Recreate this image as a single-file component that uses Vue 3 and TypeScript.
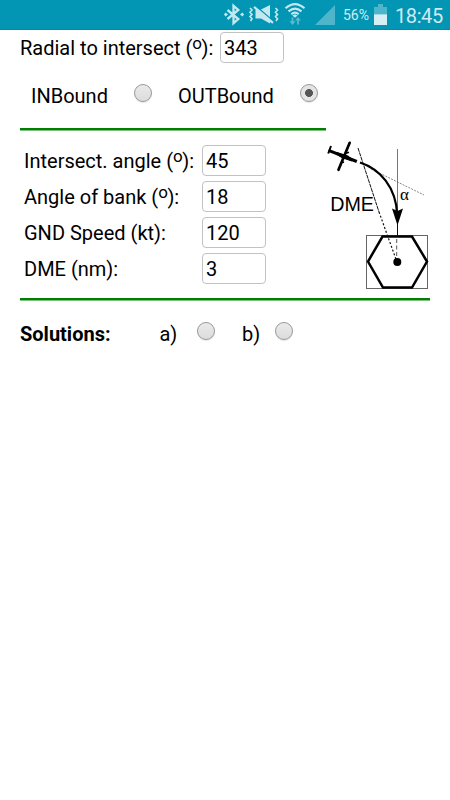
<script setup lang="ts">
import { reactive, ref } from 'vue'

interface Field {
  id: string
  label: string
  degrees: boolean
  value: string
}

const radial = ref('343')
const direction = ref<'in' | 'out'>('out')
const solution = ref<'a' | 'b' | null>(null)
const fields = reactive<Field[]>([
  { id: 'angle', label: 'Intersect. angle', degrees: true, value: '45' },
  { id: 'bank', label: 'Angle of bank', degrees: true, value: '18' },
  { id: 'speed', label: 'GND Speed (kt):', degrees: false, value: '120' },
  { id: 'dme', label: 'DME (nm):', degrees: false, value: '3' },
])
</script>

<template>
  <div class="screen">
    <header class="status">
      <svg class="status-icons" width="126" height="30" viewBox="0 0 126 30">
        <path d="M7.500 10 18.300 19 13.500 23.200V5.800L18.300 10 7.500 19" fill="none" stroke="#c4e8ef" stroke-width="2.300" />
        <g fill="#c4e8ef">
          <path d="m4 14.500 1.500-2 2.500 2-2.500 2zM24 14.500l-1.500-2-2.500 2 2.500 2z" />
          <path d="M35.500 9.500h5.500L50 5v18.500l-9-5h-5.500z" />
        </g>
        <g fill="none" stroke="#c4e8ef" stroke-width="1.600">
          <path d="m30 8 2 2-2 2.200 2 2.200-2 2.200 2 2.200-1.500 2.200M55.500 8l2 2-2 2.200 2 2.200-2 2.200 2 2.200-1.500 2.200" />
        </g>
        <path d="m35.500 5.700 18 15.500" stroke="#0395b4" stroke-width="1.500" />
        <path d="m34 6.800 19 16" stroke="#c4e8ef" stroke-width="2.200" />
        <g fill="none" stroke="#c4e8ef" stroke-width="2.100">
          <path d="M65.500 8.300q9.500-8.500 19 0M68.500 11.400q6.500-5.600 13 0M71.300 14.200q3.700-3 7.400 0" />
        </g>
        <path d="m72.300 15.600 2.700-1.400 2.700 1.400-2.700 2.200z" fill="#c4e8ef" />
        <path d="M72.500 17.500V23M78 24.500v-5.500" stroke="#5bbacd" stroke-width="1.800" />
        <path d="m69.500 21.300 3 3.700 3-3.700zM75 20.500l3-3.500 3 3.500z" fill="#5bbacd" />
        <path d="M115 5v20H95z" fill="#4fb5ca" />
      </svg>
      <span class="percent">56%</span>
      <svg class="battery" width="14" height="22" viewBox="0 0 14 22">
        <path d="M4 0h5v3h4v7.500H0V3h4z" fill="#4fb5ca" />
        <path d="M0 10.300h13V21H0z" fill="#d5eff4" />
      </svg>
      <time class="clock">18:45</time>
    </header>

    <main class="content">
      <div class="radial-row">
        <label class="radial-label" for="radial">Radial to intersect (<span class="deg">o</span>):</label>
        <input id="radial" v-model="radial" class="box" type="text" />
      </div>

      <div class="direction-row">
        <label for="inbound">INBound</label>
        <input id="inbound" v-model="direction" class="radio" type="radio" value="in" />
        <label class="out-label" for="outbound">OUTBound</label>
        <input id="outbound" v-model="direction" class="radio" type="radio" value="out" />
      </div>

      <div class="rule short"></div>

      <section class="panel">
        <div class="fields">
          <div v-for="field in fields" :key="field.id" class="field">
            <label :for="field.id">{{ field.label }}<template v-if="field.degrees"> (<span class="deg">o</span>):</template></label>
            <input :id="field.id" v-model="field.value" class="box" type="text" />
          </div>
        </div>

        <svg class="diagram" width="110" height="156" viewBox="325 136 110 156">
          <path d="M358 148 379 212" fill="none" stroke="#111" stroke-width="1" stroke-dasharray="4 .7" />
          <path d="M379 212 397 262" fill="none" stroke="#111" stroke-width="1.200" stroke-dasharray="2 2" />
          <path d="M397.500 149v87" stroke="#777" />
          <path d="M397.500 216v20" stroke="#111" />
          <path d="M396.700 239v19" stroke="#555" stroke-dasharray="4 2.500" />
          <path d="m371 169 53 26" stroke="#666" stroke-width=".8" stroke-dasharray="2 1.200" />
          <path d="M360 162.500C380 169 396 187 397.300 215" fill="none" stroke="#000" stroke-width="2.200" />
          <path d="m392 208.500 5.500 2.500 5.500-2.500-5.500 17z" />
          <path d="m328.500 150.300 28.300 11.200" stroke="#000" stroke-width="3" />
          <path d="m337 152 11 3.500 5 4-1 2-10-3.200-6-4z" />
          <path d="m349.700 142.800-11.200 27" stroke="#000" stroke-width="2.700" stroke-linecap="round" />
          <path d="m331 146-2.800 7.500" stroke="#000" stroke-width="2" />
          <path d="m346 153.300 3-1M341.500 161.500l2.500 1" stroke="#000" stroke-width="1.500" />
          <rect x="366.500" y="235.500" width="61" height="53" fill="none" stroke="#666" />
          <path d="M382.500 236.500h29.500l15 25-15 26h-29l-15-26z" fill="none" stroke="#000" stroke-width="2.500" />
          <circle cx="397.300" cy="262" r="4" />
          <text class="dme-text" x="330.200" y="211">DME</text>
          <text class="alpha" x="400" y="199.500">α</text>
        </svg>
      </section>

      <div class="rule"></div>

      <div class="solutions-row">
        <strong>Solutions:</strong>
        <label class="a-label" for="sol-a">a)</label>
        <input id="sol-a" v-model="solution" class="radio" type="radio" value="a" />
        <label class="b-label" for="sol-b">b)</label>
        <input id="sol-b" v-model="solution" class="radio" type="radio" value="b" />
      </div>
    </main>
  </div>
</template>

<style>
body {
  margin: 0;
  background: #fff;
}
</style>

<style scoped>
.screen {
  width: 450px;
  height: 800px;
  overflow: hidden;
  background: #fff;
  color: #000;
  font: 20px/24px Roboto, sans-serif;
}

.status {
  display: flex;
  box-sizing: border-box;
  height: 30px;
  padding-left: 220px;
  background: #0395b4;
  border-bottom: 1px solid #0388a6;
  color: #cdebf1;
}

.status-icons,
.battery {
  flex: none;
}

.percent {
  width: 28px;
  margin-left: -3px;
  font-size: 14px;
  line-height: 31px;
}

.battery {
  margin: 4px 0 0 3px;
}

.clock {
  margin-left: 7px;
  font-size: 20px;
  line-height: 32px;
  letter-spacing: -0.4px;
}

.content {
  padding: 2px 20px 0;
}

.radial-row {
  display: grid;
  grid-template-columns: 200px 64px;
  height: 31px;
}

.radial-label {
  padding-top: 4px;
  white-space: nowrap;
}

.deg {
  display: inline-block;
  margin-right: -0.5px;
  font-size: 17px;
  line-height: 0;
  vertical-align: 6px;
}

.box {
  box-sizing: border-box;
  width: 64px;
  height: 31px;
  margin: 0;
  padding: 0 3px;
  border: 1px solid #c2c2c2;
  border-radius: 4px;
  outline: 0;
  background: #fff;
  color: #000;
  font: inherit;
}

.direction-row {
  display: flex;
  height: 44px;
  padding: 21px 0 0 11px;
}

.direction-row > label:first-child {
  width: 103px;
}

.out-label {
  width: 122px;
  margin-left: 26px;
}

.radio {
  flex: none;
  box-sizing: border-box;
  width: 18px;
  height: 18px;
  margin: 0;
  appearance: none;
  border: 1px solid #999;
  border-radius: 50%;
  background: linear-gradient(#eaeaea, #dcdcdc);
  box-shadow: 0 1px 1px #e4e4e4;
}

.radio:checked {
  background: radial-gradient(circle, #555 0 3.6px, #e4e4e4 4.3px);
}

.rule {
  height: 2px;
  background: #008000;
  border-bottom: 1px solid #80bf80;
}

.short {
  width: 306px;
}

.panel {
  display: grid;
  grid-template-columns: 305px 110px;
  height: 167px;
}

.fields {
  padding-top: 14px;
}

.field {
  display: grid;
  grid-template-columns: 178px 64px;
  height: 36px;
  padding-left: 4px;
}

.field label {
  padding-top: 4px;
  white-space: nowrap;
}

.diagram {
  display: block;
  margin-top: 5px;
}

.dme-text {
  font: 19.700px "Liberation Sans", sans-serif;
}

.alpha {
  font: 17px "Liberation Serif", serif;
}

.solutions-row {
  display: flex;
  padding-top: 21px;
}

.solutions-row strong {
  width: 139.400px;
}

.a-label {
  width: 37.600px;
}

.b-label {
  width: 33px;
  margin-left: 27px;
}
</style>
